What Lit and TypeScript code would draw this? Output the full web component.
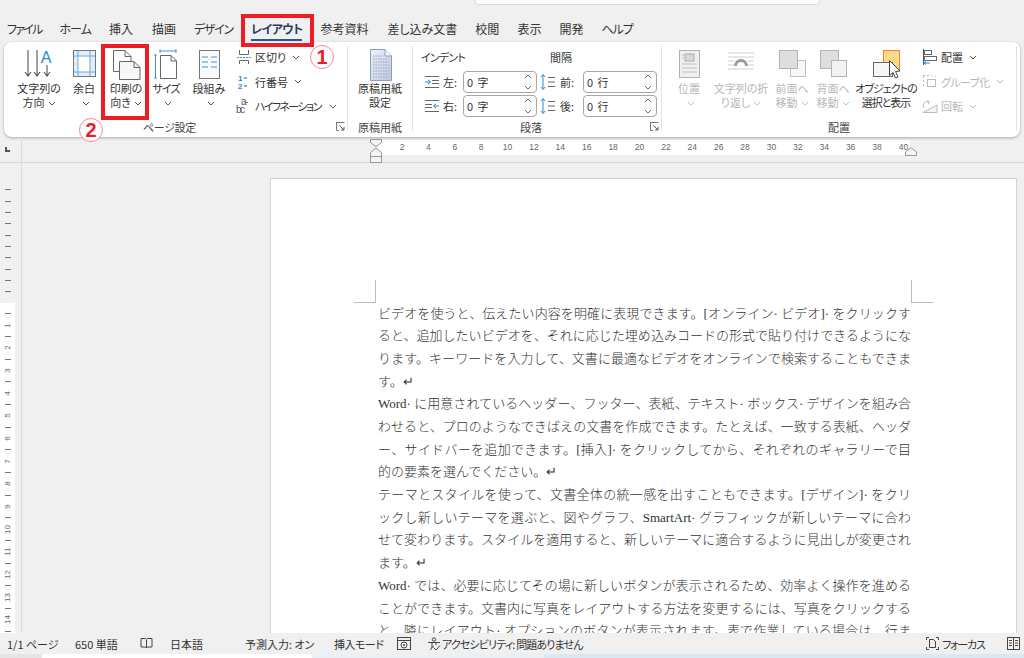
import { LitElement, html, css } from "lit";
import { customElement } from "lit/decorators.js";

const chev = (c = "#555") => html`<svg class="chev" width="8" height="5" viewBox="0 0 8 5"><path d="M1 1L4 4L7 1" fill="none" stroke=${c} stroke-width="1"/></svg>`;
const launcher = html`<svg class="launch" width="9" height="9" viewBox="0 0 9 9"><path d="M.5 3V.5H8.5M.5 .5V8.5H3" fill="none" stroke="#777"/><path d="M3.5 3.5L8 8M8 5V8H5" fill="none" stroke="#555"/></svg>`;
const spin = html`<svg class="spin" width="8" height="16" viewBox="0 0 8 16"><path d="M1 4L4 1L7 4M1 12L4 15L7 12" fill="none" stroke="#666"/></svg>`;

const I = {
  dir: html`<svg width="34" height="35"><g fill="none" stroke="#555" stroke-width="1.1"><path d="M6 4V30M3 26L6 30L9 26M15 4V30M12 26L15 30L18 26M25 19V30M22 26L25 30L28 26"/></g><text x="24" y="17" font-size="16" fill="#2b88d8" text-anchor="middle" font-family="Liberation Sans">A</text></svg>`,
  margin: html`<svg width="26" height="35"><rect x="2.5" y="4.5" width="22" height="26" fill="#e4eef8" stroke="#777"/><rect x="7" y="10" width="12" height="16" fill="#fff"/><path d="M7 5V30M19 5V30M3 10H24M3 26H24" stroke="#6aa9de" fill="none"/></svg>`,
  orient: html`<svg width="32" height="35"><g fill="#fff" stroke="#666"><path d="M3.5 4.5H15L21 10.5V25.5H3.5Z"/><path d="M15 4.5V10.5H21" fill="none"/><path d="M9.5 15.5H24L30 21.5V33.5H9.5Z" fill="#f7f7f7"/><path d="M24 15.5V21.5H30" fill="none"/></g></svg>`,
  size: html`<svg width="26" height="35"><path d="M7.5 9.5H18L23.5 15V32.5H7.5Z" fill="#fff" stroke="#666"/><path d="M18 9.5V15H23.5" fill="none" stroke="#666"/><path d="M7 5H23M7 3V7M23 3V7M2.5 9V32M1 9H4M1 32H4" stroke="#3a94dc" fill="none"/></svg>`,
  cols: html`<svg width="26" height="35"><rect x="3.5" y="4.5" width="20" height="28" fill="#fafafa" stroke="#777"/><path d="M6 11H12M15 11H21M6 16H12M15 16H21M6 21H12M15 21H21" stroke="#3a94dc" fill="none"/></svg>`,
  genko: html`<svg width="26" height="35"><defs><linearGradient id="g" x1="0" y1="0" x2="1" y2="1"><stop offset="0" stop-color="#eef1f9"/><stop offset="1" stop-color="#bcc8e2"/></linearGradient></defs><path d="M3.5 3.5H18L24.5 10V34.5H3.5Z" fill="url(#g)" stroke="#8c9cc0"/><path d="M18 3.5V10H24.5" fill="#f4f6fb" stroke="#8c9cc0"/><path d="M6 10H16M6 13H22M6 16H22M6 19H22M6 22H22M6 25H22M6 28H22M6 31H22" stroke="#9aa4ba" stroke-dasharray="1.5 1" fill="none"/></svg>`,
  pos: html`<svg width="26" height="35"><rect x="3.5" y="4.5" width="20" height="27" fill="#f0f0f0" stroke="#b0b0b0"/><rect x="9" y="8" width="9" height="7" fill="#d8d8d8" stroke="#aaa"/><path d="M6 9H8M6 12H8M6 18H21M6 22H21M6 26H21" stroke="#c0c0c0"/></svg>`,
  wrap: html`<svg width="30" height="35"><path d="M2 7H28M2 11H28M2 15H8M22 15H28M2 19H8M22 19H28M2 23H28" stroke="#d0d0d0" fill="none"/><path d="M8 20A7 7 0 0 1 22 20H19A4 4 0 0 0 11 20Z" fill="#9a9a9a"/></svg>`,
  front: html`<svg width="30" height="35"><rect x="13.5" y="14.5" width="15" height="16" fill="#f8f8f8" stroke="#c0c0c0"/><rect x="2.5" y="4.5" width="18" height="18" fill="#dedede" stroke="#b4b4b4"/></svg>`,
  back: html`<svg width="30" height="35"><rect x="2.5" y="4.5" width="18" height="18" fill="#dedede" stroke="#b4b4b4"/><rect x="13.5" y="14.5" width="15" height="16" fill="#f2f2f2" stroke="#b4b4b4"/></svg>`,
  select: html`<svg width="34" height="35"><rect x="14.5" y="4.5" width="16" height="19" fill="#fcd98c" stroke="#e58a2b"/><rect x="4.5" y="16.5" width="19" height="14" fill="#f6f6f6" stroke="#666"/><path d="M20.5 14.5V29.5L24 26.5L26.5 32L29 31L26.5 25.5L31 25Z" fill="#fff" stroke="#444"/></svg>`,
  brk: html`<svg width="16" height="16"><path d="M3.5 1V5.5H12.5V1M3.5 15V11.5H12.5V15" fill="none" stroke="#666"/><path d="M1 8.5H15" stroke="#3a94dc" stroke-dasharray="2 1"/></svg>`,
  nums: html`<svg width="16" height="16"><text x="2" y="7" font-size="8" font-weight="700" fill="#2b88d8" font-family="Liberation Sans">1</text><text x="2" y="15" font-size="8" font-weight="700" fill="#2b88d8" font-family="Liberation Sans">2</text><path d="M8 4H11M8 12H11" stroke="#555"/></svg>`,
  hyph: html`<svg width="16" height="16"><text x="5" y="7" font-size="10" fill="#555" font-family="Liberation Sans">a-</text><text x="0" y="15" font-size="10" fill="#555" font-family="Liberation Sans">bc</text></svg>`,
  indL: html`<svg width="14" height="14"><path d="M0 1.5H14M7 5.5H14M7 8.5H14M0 12.5H14" stroke="#666"/><path d="M0 7H5M3 5L5.5 7L3 9" fill="none" stroke="#2b88d8"/></svg>`,
  indR: html`<svg width="14" height="14"><path d="M0 1.5H14M0 5.5H7M0 8.5H7M0 12.5H14" stroke="#666"/><path d="M14 7H9M11 5L8.5 7L11 9" fill="none" stroke="#2b88d8"/></svg>`,
  spB: html`<svg width="15" height="16"><path d="M3 1V15M1 3L3 .5L5 3M1 13L3 15.5L5 13" fill="none" stroke="#2b88d8"/><path d="M8 3.5H15M8 8H15M8 12.5H15" stroke="#666"/></svg>`,
  align: html`<svg width="16" height="16"><path d="M1.5 0V16" stroke="#555"/><rect x="2.5" y="1.5" width="7" height="4" fill="#fff" stroke="#666"/><rect x="2.5" y="7.5" width="12" height="4" fill="#fff" stroke="#666"/><path d="M8 14H2M4 12.5L2 14L4 15.5" fill="none" stroke="#2b88d8"/></svg>`,
  group: html`<svg width="16" height="16"><g fill="none" stroke="#bbb"><rect x="5.5" y="5.5" width="8" height="7"/><path d="M1.5 2V13M1 1.5H10M13.5 2V3" stroke-dasharray="2 2"/></g></svg>`,
  rotate: html`<svg width="16" height="16"><path d="M1 14.5H15V7Z" fill="#f4f4f4" stroke="#bbb"/><path d="M2 10A4 4 0 0 1 7 4M5 2.5L7.5 4L6 6" fill="none" stroke="#bbb"/></svg>`,
  book: html`<svg width="13" height="13" viewBox="0 0 13 13"><path d="M1 1.5H5.5L6.5 2.5L7.5 1.5H12V10H7.5L6.5 11L5.5 10H1ZM6.5 2.5V11" fill="none" stroke="#444"/></svg>`,
  macro: html`<svg width="14" height="13" viewBox="0 0 14 13"><rect x=".5" y=".5" width="13" height="12" fill="none" stroke="#444"/><path d="M.5 3.5H13.5" stroke="#444"/><circle cx="7" cy="8" r="3" fill="none" stroke="#444"/><circle cx="7" cy="8" r="1" fill="#444"/></svg>`,
  a11y: html`<svg width="14" height="14" viewBox="0 0 14 14"><circle cx="7" cy="2.5" r="1.7" fill="none" stroke="#444"/><path d="M1 5.5H13M5 6V10L3.5 13M9 6V8M5 10H7" fill="none" stroke="#444"/><path d="M7 11L9 13L13 8.5" fill="none" stroke="#444"/></svg>`,
  focus: html`<svg width="13" height="13" viewBox="0 0 13 13"><path d="M.5 3V.5H3M10 .5H12.5V3M.5 10V12.5H3M10 12.5H12.5V10" fill="none" stroke="#444"/><path d="M3.5 2.5H7.5L9.5 4.5V10.5H3.5Z" fill="none" stroke="#444"/></svg>`,
  view: html`<svg width="13" height="13" viewBox="0 0 13 13"><rect x=".5" y=".5" width="12" height="12" fill="none" stroke="#444"/><path d="M6.5 1V12M2 3.5H5M2 6H5M2 8.5H5M8 3.5H11M8 6H11M8 8.5H11" stroke="#444"/></svg>`,
};

const lines: [string, boolean][] = [
  ["ビデオを使うと、伝えたい内容を明確に表現できます。[オンライン· ビデオ]· をクリックす", true],
  ["ると、追加したいビデオを、それに応じた埋め込みコードの形式で貼り付けできるようにな", true],
  ["ります。キーワードを入力して、文書に最適なビデオをオンラインで検索することもできま", true],
  ["す。↵", false],
  ["Word· に用意されているヘッダー、フッター、表紙、テキスト· ボックス· デザインを組み合", true],
  ["わせると、プロのようなできばえの文書を作成できます。たとえば、一致する表紙、ヘッダ", true],
  ["ー、サイドバーを追加できます。[挿入]· をクリックしてから、それぞれのギャラリーで目", true],
  ["的の要素を選んでください。↵", false],
  ["テーマとスタイルを使って、文書全体の統一感を出すこともできます。[デザイン]· をクリ", true],
  ["ックし新しいテーマを選ぶと、図やグラフ、SmartArt· グラフィックが新しいテーマに合わ", true],
  ["せて変わります。スタイルを適用すると、新しいテーマに適合するように見出しが変更され", true],
  ["ます。↵", false],
  ["Word· では、必要に応じてその場に新しいボタンが表示されるため、効率よく操作を進める", true],
  ["ことができます。文書内に写真をレイアウトする方法を変更するには、写真をクリックする", true],
  ["と、隣にレイアウト· オプションのボタンが表示されます。表で作業している場合は、行ま", true],
];

const tabs: [string, string][] = [["ファイル", "t15"], ["ホーム", "t10"], ["挿入", ""], ["描画", "p"], ["デザイン", "t12"], ["レイアウト", "on"], ["参考資料", ""], ["差し込み文書", "p"], ["校閲", ""], ["表示", ""], ["開発", ""], ["ヘルプ", "t10"]];

@customElement("app-root")
export class AppRoot extends LitElement {
  static styles = css`
    :host { display: block; position: relative; width: 1024px; height: 658px; overflow: hidden; background: #f0f0f0; color: #333;
      font-family: "Noto Sans CJK JP", "Liberation Sans", sans-serif; font-feature-settings: "palt"; }
    svg { flex: none; }
    .app { display: flex; flex-direction: column; height: 658px; }
    .top { height: 17px; flex: none; }
    .search { width: 345px; height: 5px; margin-left: 475px; background: #fff; border: 1px solid #ddd; border-top: 0; border-radius: 0 0 4px 4px; box-sizing: border-box; }
    .tabs { height: 25px; flex: none; display: flex; align-items: flex-start; padding-left: 7px; gap: 18px; font-size: 12px; line-height: 24px; color: #333; }
    .tab { position: relative; white-space: nowrap; }
    .tab.p { margin-left: 1px; }
    .tab.t15 { letter-spacing: -1.75px; }
    .tab.t10 { letter-spacing: -1px; }
    .tab.t12 { letter-spacing: -1.25px; }
    .tab.on { font-weight: 700; color: #2a3f66; letter-spacing: -.6px; }
    .tab.on::after { content: ""; position: absolute; left: 0; right: 0; bottom: 0; height: 2px; background: #2b579a; }
    .ribbon { flex: none; height: 95px; margin: 0 4px; background: #fff; border-radius: 8px; box-shadow: 0 1px 3px rgba(0,0,0,.3); display: flex; box-sizing: border-box; padding: 4px 3px 0 0; }
    .grp { position: relative; display: flex; flex-direction: column; height: 85px; border-right: 1px solid #e2e2e2; flex: none; box-sizing: border-box; }
    .grp.g1 { width: 344px; padding-left: 8px; }
    .grp.g2 { width: 65px; }
    .grp.g3 { width: 249px; padding-left: 8px; }
    .grp.g4 { width: 355px; padding-left: 7px; }
    .body { display: flex; height: 74px; flex: none; }
    .glabel { font-size: 11px; line-height: 14px; text-align: center; color: #444; }
    .g1 .glabel { padding-right: 20px; letter-spacing: -.3px; }
    .g3 .glabel { padding-right: 20px; }
    .g4 .glabel { padding-right: 7px; }
    .launch { position: absolute; right: 2px; bottom: 0; }
    .lg { display: flex; flex-direction: column; align-items: center; flex: none; font-size: 11px; line-height: 14px; text-align: center; white-space: nowrap; color: #333; }
    .lg.off { color: #b8b8b8; }
    .lg.tight { letter-spacing: -1px; }
    .ic { height: 35px; flex: none; display: flex; align-items: center; justify-content: center; }
    .w54 { width: 54px; } .w36 { width: 36px; } .w48 { width: 48px; } .w32 { width: 32px; } .w63 { width: 64px; }
    .w40 { width: 40px; } .w64 { width: 64px; } .w38 { width: 38px; } .w44 { width: 44px; } .w62 { width: 62px; }
    .chev { margin-left: 3px; vertical-align: 1px; }
    .smalls { display: flex; flex-direction: column; padding-top: 3px; gap: 8.5px; font-size: 11px; flex: none; }
    .g4 .smalls { padding-left: 5px; }
    .sm { display: flex; align-items: center; gap: 3px; height: 16px; white-space: nowrap; line-height: 16px; color: #333; }
    .sm.off { color: #b8b8b8; }
    .sm.k { letter-spacing: -1.6px; }
    .sm.k .chev { margin-left: 5px; }
    .sm.k2 { letter-spacing: -.6px; }
    .form { display: grid; grid-template-columns: 119px 119px; grid-auto-rows: 24px; font-size: 11px; height: 70px; flex: none; }
    .hd { line-height: 22px; font-size: 11px; }
    .hd.k { letter-spacing: -.8px; }
    .hd.second { padding-left: 10px; }
    .fld { display: flex; align-items: center; margin-top: -1px; }
    .fld svg:first-child { margin-left: 4px; }
    .fld.r svg:first-child { margin-left: 0; }
    .fld .n { width: 22px; padding-left: 4px; box-sizing: border-box; white-space: nowrap; }
    .fld.r .n { padding-left: 5px; width: 26px; }
    .box { width: 74px; height: 22px; border: 1px solid #a6a6a6; border-radius: 4px; box-sizing: border-box; display: flex; align-items: center; justify-content: space-between; padding: 0 4px 0 3px; margin-left: 2px; }
    .box span { font-size: 11px; letter-spacing: 1px; }
    .rule { flex: none; height: 25px; border-bottom: 1px solid #d8d8d8; display: flex; }
    .corner { width: 21px; flex: none; border-right: 1px solid #dcdcdc; box-sizing: content-box; position: relative; }
    .corner::after { content: ""; position: absolute; left: 5px; top: 10px; width: 3px; height: 3px; border-left: 2px solid #555; border-bottom: 2px solid #555; }
    .hr { width: 535px; height: 15px; margin: 3px 0 0 353px; background: #fff; display: flex; padding-left: 13.8px; box-sizing: border-box; font-size: 8.5px; line-height: 15px; color: #666; font-family: "Liberation Sans", sans-serif; }
    .hr span { width: 26.4px; flex: none; text-align: center; }
    .main { flex: 1; min-height: 0; display: flex; overflow: hidden; }
    .vr { width: 15px; flex: none; display: flex; flex-direction: column; margin-right: 6px; }
    .vgray { height: 140px; flex: none; padding-top: 21.3px; box-sizing: border-box; }
    .vwhite { flex: 1; background: #fff; padding-top: 5.33px; }
    .vt { height: 11.33px; display: flex; align-items: center; justify-content: center; font-size: 8px; color: #666; font-family: "Liberation Sans", sans-serif; }
    .vt i { display: block; width: 6px; height: 1px; background: #777; }
    .vt b { display: block; font-weight: 400; transform: rotate(-90deg); line-height: 11px; white-space: nowrap; }
    .docarea { flex: 1; min-width: 0; border-left: 1px solid #dcdcdc; padding: 16px 8px 0 249px; box-sizing: border-box; }
    .page { position: relative; height: 600px; background: #fff; box-shadow: 0 0 0 1px #d4d4d4; padding: 123.6px 105px 0 107px; box-sizing: border-box; font-family: "Liberation Serif", "Noto Sans CJK JP", serif; font-feature-settings: normal; font-size: 13px; color: #333; }
    .ln { height: 22.7px; line-height: 22.7px; white-space: normal; overflow: hidden; font-weight: 300; }
    .ln.fit { text-align: justify; text-align-last: justify; text-justify: inter-character; }
    .crn { position: absolute; top: 101px; width: 21px; height: 22px; border-bottom: 1px solid #bbb; }
    .crn.l { left: 83px; border-right: 1px solid #bbb; }
    .crn.r { right: 83px; border-left: 1px solid #bbb; }
    .status { flex: none; height: 21px; background: #f0f0f0; display: flex; align-items: center; font-size: 11px; color: #333; white-space: nowrap; padding-left: 7px; position: relative; }
    .status > * { flex: none; }
    .st1 { width: 68px; } .st2 { width: 65px; } .st3 { width: 30px; display: flex; } .st4 { width: 75px; } .st5 { width: 89px; } .st6 { width: 63px; letter-spacing: -.5px; } .st7 { width: 30px; display: flex; }
    .st8 { width: 156px; display: flex; align-items: center; letter-spacing: -.85px; } .st8 svg { margin-right: 1px; } .st9 { width: 343px; }
    .st10 { display: flex; align-items: center; gap: 3px; width: 81px; letter-spacing: -1.2px; }
    .st11 { display: flex; }
    .bottom { flex: none; height: 4px; display: flex; background: #dce8f1; }
    .bottom .a { width: 42px; background: #e6e6e6; }
    .bottom .b { width: 270px; background: #fff; }
    .bottom .c { width: 232px; background: #eaf1f6; }
    .mark { position: absolute; border: 4px solid #ee1c25; box-sizing: border-box; }
    .m1 { left: 241px; top: 14px; width: 73px; height: 33px; }
    .m2 { left: 101px; top: 44px; width: 48px; height: 76px; }
    .num { position: absolute; width: 24px; height: 24px; border-radius: 50%; background: #fff; border: 1px solid #f48a8e; box-sizing: border-box; color: #ee1c25; font: 700 20px/22px "Liberation Sans", sans-serif; text-align: center; }
    .n1 { left: 310px; top: 45px; }
    .n2 { left: 79px; top: 118px; }
    .ind { position: absolute; }
    .i1 { left: 370px; top: 139px; }
    .i2 { left: 905px; top: 147px; }
  `;

  private vticks(n: number, start: number) {
    const out = [];
    for (let i = 0; i < n; i++) {
      out.push(i % 2 === 0 ? html`<div class="vt"><i></i></div>` : html`<div class="vt"><b>${start + (i - 1) / 2}</b></div>`);
    }
    return out;
  }

  render() {
    return html`<div class="app">
      <div class="top"><div class="search"></div></div>
      <div class="tabs">${tabs.map(([t, c]) => html`<span class="tab ${c}">${t}</span>`)}</div>
      <div class="ribbon">
        <div class="grp g1">
          <div class="body">
            <div class="lg w54"><div class="ic">${I.dir}</div>文字列の<span>方向${chev()}</span></div>
            <div class="lg w36"><div class="ic">${I.margin}</div>余白<span>${chev()}</span></div>
            <div class="lg w48"><div class="ic">${I.orient}</div>印刷の<span>向き${chev()}</span></div>
            <div class="lg w32 tight"><div class="ic">${I.size}</div>サイズ<span>${chev()}</span></div>
            <div class="lg w54"><div class="ic">${I.cols}</div>段組み<span>${chev()}</span></div>
            <div class="smalls">
              <div class="sm">${I.brk}区切り${chev()}</div>
              <div class="sm">${I.nums}行番号${chev()}</div>
              <div class="sm k">${I.hyph}ハイフネーション${chev()}</div>
            </div>
          </div>
          <div class="glabel">ページ設定</div>${launcher}
        </div>
        <div class="grp g2">
          <div class="body"><div class="lg w63"><div class="ic">${I.genko}</div>原稿用紙<span>設定</span></div></div>
          <div class="glabel">原稿用紙</div>
        </div>
        <div class="grp g3">
          <div class="body"><div class="form">
            <div class="hd k">インデント</div><div class="hd second">間隔</div>
            <div class="fld">${I.indL}<span class="n">左:</span><div class="box"><span>0 字</span>${spin}</div></div>
            <div class="fld r">${I.spB}<span class="n">前:</span><div class="box"><span>0 行</span>${spin}</div></div>
            <div class="fld">${I.indR}<span class="n">右:</span><div class="box"><span>0 字</span>${spin}</div></div>
            <div class="fld r">${I.spB}<span class="n">後:</span><div class="box"><span>0 行</span>${spin}</div></div>
          </div></div>
          <div class="glabel">段落</div>${launcher}
        </div>
        <div class="grp g4">
          <div class="body">
            <div class="lg off w40"><div class="ic">${I.pos}</div>位置<span>${chev("#bbb")}</span></div>
            <div class="lg off w64"><div class="ic">${I.wrap}</div>文字列の折<span>り返し${chev("#bbb")}</span></div>
            <div class="lg off w38"><div class="ic">${I.front}</div>前面へ<span>移動${chev("#bbb")}</span></div>
            <div class="lg off w44"><div class="ic">${I.back}</div>背面へ<span>移動${chev("#bbb")}</span></div>
            <div class="lg w62 tight"><div class="ic">${I.select}</div>オブジェクトの<span>選択と表示</span></div>
            <div class="smalls">
              <div class="sm">${I.align}配置${chev()}</div>
              <div class="sm off k2">${I.group}グループ化${chev("#bbb")}</div>
              <div class="sm off">${I.rotate}回転${chev("#bbb")}</div>
            </div>
          </div>
          <div class="glabel">配置</div>
        </div>
      </div>
      <div class="rule">
        <div class="corner"></div>
        <div class="hr">${Array.from({ length: 20 }, (_, i) => html`<span>${(i + 1) * 2}</span>`)}</div>
      </div>
      <div class="main">
        <div class="vr">
          <div class="vgray">${Array.from({ length: 10 }, () => html`<div class="vt"><i></i></div>`)}</div>
          <div class="vwhite">${this.vticks(29, 1)}</div>
        </div>
        <div class="docarea">
          <div class="page">
            <div class="crn l"></div><div class="crn r"></div>
            ${lines.map(([t, fit]) => html`<div class="ln ${fit ? "fit" : ""}">${t}</div>`)}
          </div>
        </div>
      </div>
      <div class="status">
        <span class="st1">1/1 ページ</span><span class="st2">650 単語</span><span class="st3">${I.book}</span><span class="st4">日本語</span>
        <span class="st5">予測入力: オン</span><span class="st6">挿入モード</span><span class="st7">${I.macro}</span>
        <span class="st8">${I.a11y}アクセシビリティ: 問題ありません</span><span class="st9"></span>
        <span class="st10">${I.focus}フォーカス</span><span class="st11">${I.view}</span>
      </div>
      <div class="bottom"><div class="a"></div><div class="b"></div><div class="c"></div></div>
    </div>
    <svg class="ind i1" width="13" height="24" viewBox="0 0 13 24"><path d="M.5 .5H11.5V3.5L6 8L.5 3.5Z" fill="#f4f4f4" stroke="#999"/><path d="M6 9L11.5 13.5V23.5H.5V13.5ZM.5 17.5H11.5" fill="#f4f4f4" stroke="#999"/></svg>
    <svg class="ind i2" width="13" height="9" viewBox="0 0 13 9"><path d="M6 .5L11.5 5V8.5H.5V5Z" fill="#f4f4f4" stroke="#999"/></svg>
    <div class="mark m1"></div><div class="mark m2"></div>
    <div class="num n1">1</div><div class="num n2">2</div>`;
  }
}
